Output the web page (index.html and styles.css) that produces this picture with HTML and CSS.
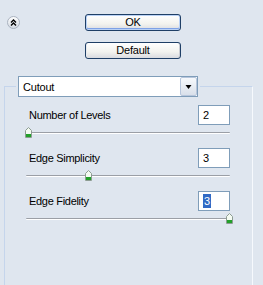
FILE: index.html
```html
<!DOCTYPE html>
<html lang="en">
<head>
    <meta charset="UTF-8">
    <meta name="viewport" content="width=device-width, initial-scale=1.0">
    <title>Cutout</title>
    <link rel="stylesheet" href="styles.css">
</head>
<body>
<div class="panel">
    <div class="top">
        <button class="collapse" title="Collapse">
            <svg width="13" height="13" viewBox="0 0 13 13">
                <defs>
                    <linearGradient id="cg" x1="0" y1="0" x2="0" y2="1">
                        <stop offset="0" stop-color="#ffffff"/>
                        <stop offset="1" stop-color="#d3d9e2"/>
                    </linearGradient>
                </defs>
                <circle cx="6.5" cy="6.5" r="6" fill="url(#cg)" stroke="#a9b2bf"/>
                <path d="M4 6.5 L6.5 4 L9 6.5 M4 9.5 L6.5 7 L9 9.5" fill="none" stroke="#000" stroke-width="1.4"/>
            </svg>
        </button>
        <div class="actions">
            <button class="btn btn-default">OK</button>
            <button class="btn">Default</button>
        </div>
    </div>

    <fieldset class="group">
        <legend class="legend">
            <div class="select">
                <span class="select-value">Cutout</span>
                <span class="select-arrow">
                    <svg width="7" height="4" viewBox="0 0 7 4"><path d="M0.5 0 H6.5 L3.5 4 Z" fill="#000"/></svg>
                </span>
            </div>
        </legend>

        <div class="settings">
            <div class="setting">
                <div class="setting-row">
                    <span class="setting-label">Number of Levels</span>
                    <div class="field">2</div>
                </div>
                <div class="slider">
                    <div class="thumb" style="left: -1px">
                        <svg width="7" height="11" viewBox="0 0 7 11">
                            <path d="M3.5 0.5 L6.5 3.5 V10.5 H0.5 V3.5 Z" fill="#f4fbf2" stroke="#8d9c92"/>
                            <rect x="1" y="7" width="5" height="3" fill="#22a02a"/>
                        </svg>
                    </div>
                </div>
            </div>

            <div class="setting">
                <div class="setting-row">
                    <span class="setting-label">Edge Simplicity</span>
                    <div class="field">3</div>
                </div>
                <div class="slider">
                    <div class="thumb" style="left: 59px">
                        <svg width="7" height="11" viewBox="0 0 7 11">
                            <path d="M3.5 0.5 L6.5 3.5 V10.5 H0.5 V3.5 Z" fill="#f4fbf2" stroke="#8d9c92"/>
                            <rect x="1" y="7" width="5" height="3" fill="#22a02a"/>
                        </svg>
                    </div>
                </div>
            </div>

            <div class="setting">
                <div class="setting-row">
                    <span class="setting-label">Edge Fidelity</span>
                    <div class="field"><span class="selection">3</span></div>
                </div>
                <div class="slider">
                    <div class="thumb" style="left: 200px">
                        <svg width="7" height="11" viewBox="0 0 7 11">
                            <path d="M3.5 0.5 L6.5 3.5 V10.5 H0.5 V3.5 Z" fill="#f4fbf2" stroke="#8d9c92"/>
                            <rect x="1" y="7" width="5" height="3" fill="#22a02a"/>
                        </svg>
                    </div>
                </div>
            </div>
        </div>
    </fieldset>
</div>
</body>
</html>
```

FILE: styles.css
```css
body {
    font-family: "Liberation Sans", Arial, sans-serif;
    font-size: 11px;
    background-color: #dfe6ef;
    color: #000;
    margin: 0;
}
.panel {
    height: 285px;
    display: flex;
    flex-direction: column;
    overflow: hidden;
}
.top {
    display: flex;
    align-items: flex-start;
    padding: 14px 0 0 7px;
}
.collapse {
    width: 13px;
    height: 13px;
    margin-top: 2px;
    padding: 0;
    border: none;
    background: transparent;
    display: block;
}
.collapse svg {
    display: block;
}
.actions {
    display: flex;
    flex-direction: column;
    gap: 11px;
    margin-left: 65px;
}
.btn {
    width: 96px;
    height: 17px;
    padding: 0;
    font-family: inherit;
    font-size: 11px;
    letter-spacing: -0.2px;
    color: #000;
    line-height: 15px;
    border: 1px solid #1f3f66;
    border-radius: 3px;
    background: linear-gradient(#ffffff, #f2f2ee 60%, #d9dbe0);
    box-shadow: inset 1px 0 0 #e8eaee, inset -1px 0 0 #c9ccd3;
}
.btn-default {
    box-shadow: inset 0 0 0 1px #b9d1f5, inset 0 -1px 0 1px #7fa2e6;
}
.group {
    flex: 1;
    margin: 17px 10px 0 4px;
    padding: 0;
    min-width: 0;
    border: none;
    border-top: 1px solid #c5d5ec;
    border-left: 1px solid #c5d5ec;
    border-right: 1px solid #f6f9fd;
}
.legend {
    margin-left: 11px;
    padding: 0 2px;
}
.select {
    width: 180px;
    height: 21px;
    box-sizing: border-box;
    border: 1px solid #7f9db9;
    background: #fff;
    display: flex;
    align-items: center;
    justify-content: space-between;
}
.select-value {
    padding-left: 4px;
    letter-spacing: -0.2px;
}
.select-arrow {
    width: 17px;
    height: 19px;
    box-sizing: border-box;
    border: 1px solid #b7c6dc;
    border-radius: 2px;
    background: linear-gradient(#f7f9fc, #d9e0ea);
    display: flex;
    align-items: center;
    justify-content: center;
}
.select-arrow svg {
    display: block;
}
.settings {
    padding: 8px 22px 0 21px;
}
.setting {
    margin-bottom: 14px;
}
.setting-row {
    display: flex;
    align-items: center;
    justify-content: space-between;
    height: 20px;
}
.setting-label {
    padding-left: 3px;
    letter-spacing: -0.3px;
}
.field {
    width: 32px;
    height: 20px;
    box-sizing: border-box;
    border: 1px solid #7f9db9;
    background: #fff;
    padding-left: 4px;
    line-height: 18px;
}
.selection {
    background: #316ac5;
    color: #fff;
    padding: 1px 1px;
}
.slider {
    position: relative;
    margin-top: 7px;
    height: 2px;
    border-top: 1px solid #9b9fa6;
    border-bottom: 1px solid #ffffff;
    border-radius: 1px;
    box-sizing: border-box;
}
.thumb {
    position: absolute;
    top: -6px;
    width: 7px;
    height: 11px;
}
.thumb svg {
    display: block;
}
```
